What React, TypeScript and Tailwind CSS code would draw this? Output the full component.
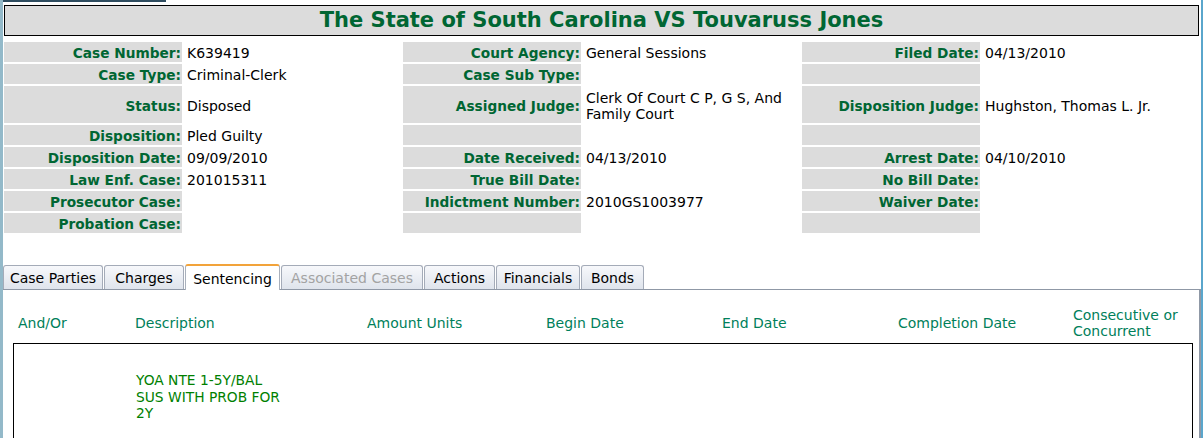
import React from "react";

type Cell = { label: string; value?: string };

const rows: Cell[][] = [
  [
    { label: "Case Number:", value: "K639419" },
    { label: "Court Agency:", value: "General Sessions" },
    { label: "Filed Date:", value: "04/13/2010" },
  ],
  [
    { label: "Case Type:", value: "Criminal-Clerk" },
    { label: "Case Sub Type:" },
    { label: "" },
  ],
  [
    { label: "Status:", value: "Disposed" },
    { label: "Assigned Judge:", value: "Clerk Of Court C P, G S, And Family Court" },
    { label: "Disposition Judge:", value: "Hughston, Thomas L. Jr." },
  ],
  [
    { label: "Disposition:", value: "Pled Guilty" },
    { label: "" },
    { label: "" },
  ],
  [
    { label: "Disposition Date:", value: "09/09/2010" },
    { label: "Date Received:", value: "04/13/2010" },
    { label: "Arrest Date:", value: "04/10/2010" },
  ],
  [
    { label: "Law Enf. Case:", value: "201015311" },
    { label: "True Bill Date:" },
    { label: "No Bill Date:" },
  ],
  [
    { label: "Prosecutor Case:" },
    { label: "Indictment Number:", value: "2010GS1003977" },
    { label: "Waiver Date:" },
  ],
  [
    { label: "Probation Case:" },
    { label: "" },
    { label: "" },
  ],
];

const tabs = [
  { name: "Case Parties", w: "w-[100px]" },
  { name: "Charges", w: "w-[80px]" },
  { name: "Sentencing", w: "w-[95px]", active: true },
  { name: "Associated Cases", w: "w-[142px]", disabled: true },
  { name: "Actions", w: "w-[71px]" },
  { name: "Financials", w: "w-[84px]" },
  { name: "Bonds", w: "w-[63px]" },
];

export default function App() {
  return (
    <div className="flex h-[438px] w-[1203px] overflow-hidden bg-white font-['DejaVu_Sans',_Verdana,_sans-serif] text-black">
      {/* left page strip */}
      <div className="w-[3px] shrink-0 bg-[#93b9c9]" />
      <div className="flex w-[1198px] shrink-0 flex-col">
        {/* top stub */}
        <div className="h-[3px] w-[163px] border-x border-b-2 border-[#2f4d60] bg-[#bcd2e0]" />
        {/* title */}
        <div className="ml-[1px] mt-[3px] flex h-[31px] w-[1195px] items-center justify-center border border-black bg-[#dcdcdc] pt-[1px] text-[21px] font-bold text-[#006633]">
          The State of South Carolina VS Touvaruss Jones
        </div>
        {/* case info grid */}
        <div className="ml-[1px] mt-[6px] grid grid-cols-[178px_221px_178px_221px_178px_219px] gap-y-[2px]">
          {rows.map((row, ri) =>
            row.map((c, ci) => (
              <React.Fragment key={`${ri}-${ci}`}>
                <div
                  className={`flex items-center justify-end bg-[#dcdcdc] pr-[1px] pt-[2px] text-[13.7px] font-bold leading-[16px] text-[#006633] ${
                    ri === 2 ? "h-[37px]" : "h-[20px]"
                  }`}
                >
                  {c.label}
                </div>
                <div
                  className={`flex items-center pl-[5px] pr-[4px] pt-[2px] text-[14px] leading-[16px] ${
                    ri === 2 ? "h-[37px]" : "h-[20px]"
                  }`}
                >
                  {c.value ?? ""}
                </div>
              </React.Fragment>
            ))
          )}
        </div>
        {/* tabs */}
        <div className="mt-[32px] flex h-[25px] items-end gap-[1px] border-b border-[#8f98a6] pr-[2px]">
          {tabs.map((t) => (
            <div
              key={t.name}
              className={`${t.w} flex items-center justify-center rounded-t-[3px] border-x border-t pt-[1px] text-[14px] leading-[16px] ${
                t.active
                  ? "-mb-[1px] h-[26px] border-x-[#a9b0bc] border-t-2 border-t-[#f2a33a] bg-white"
                  : "h-[24px] border-[#a4abb8] bg-gradient-to-b from-[#f7f8fb] to-[#dfe4ec]"
              } ${t.disabled ? "text-[#a3a3a3]" : "text-black"}`}
            >
              {t.name}
            </div>
          ))}
        </div>
        {/* panel */}
        <div className="flex flex-1 flex-col border-r-2 border-[#8f98a6]">
          <div className="mt-[12px] grid h-[40px] grid-cols-[117px_232px_179px_176px_176px_175px_1fr] items-center pl-[15px] pt-[1px] text-[14px] leading-[16px] text-[#00805a]">
            <div>And/Or</div>
            <div>Description</div>
            <div>Amount Units</div>
            <div>Begin Date</div>
            <div>End Date</div>
            <div>Completion Date</div>
            <div>
              Consecutive or
              <br />
              Concurrent
            </div>
          </div>
          <div className="ml-[10px] mt-[1px] h-[140px] w-[1180px] border border-black pl-[122px] pt-[28px]">
            <div className="text-[13.8px] leading-[16.7px] text-[#008000]">
              YOA NTE 1-5Y/BAL
              <br />
              SUS WITH PROB FOR
              <br />
              2Y
            </div>
          </div>
        </div>
      </div>
      {/* right page strip */}
      <div className="w-[2px] shrink-0 bg-[#5aa6cc]" />
    </div>
  );
}
